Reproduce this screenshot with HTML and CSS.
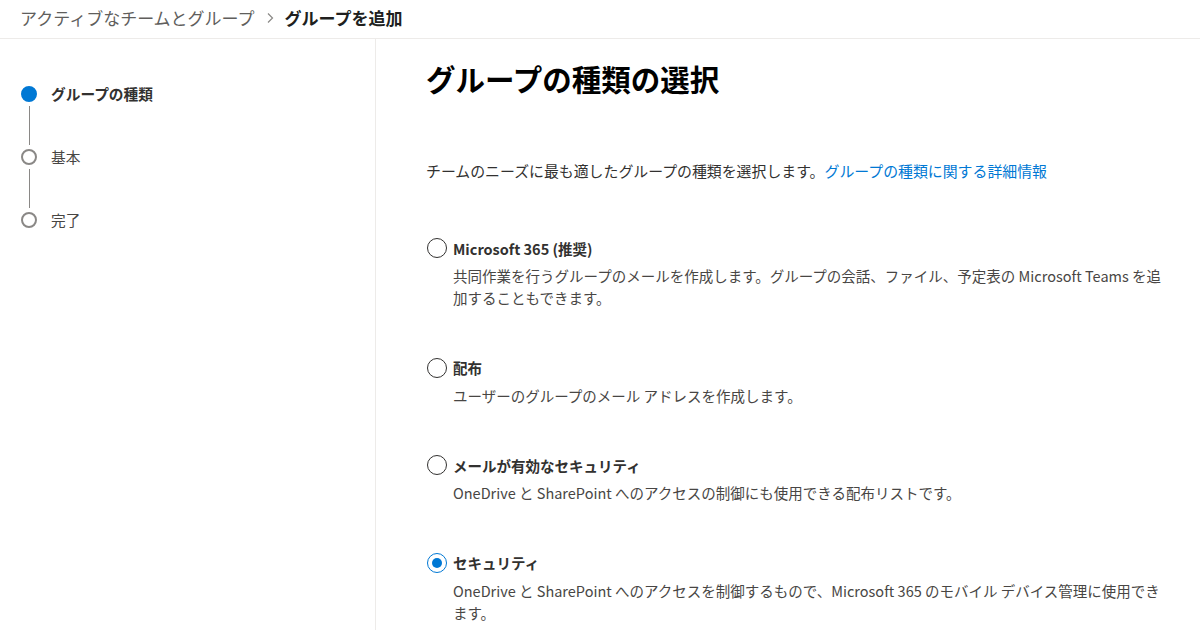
FILE: index.html
```html
<!DOCTYPE html>
<html lang="ja">
<head>
<meta charset="utf-8">
<title>グループを追加</title>
<link rel="stylesheet" href="styles.css">
</head>
<body>
<header class="topbar">
  <nav class="crumbs">
    <span class="crumb">アクティブなチームとグループ</span>
    <svg class="crumb-sep" width="10" height="12" viewBox="0 0 10 12"><path d="M3 1.5 L7.5 6 L3 10.5" fill="none" stroke="#8a8886" stroke-width="1.2"/></svg>
    <span class="crumb current">グループを追加</span>
  </nav>
</header>
<div class="layout">
  <aside class="wizard">
    <div class="step active"><span class="dot"></span><span class="step-label">グループの種類</span></div>
    <div class="connector"></div>
    <div class="step"><span class="dot"></span><span class="step-label">基本</span></div>
    <div class="connector"></div>
    <div class="step"><span class="dot"></span><span class="step-label">完了</span></div>
  </aside>
  <main class="content">
    <h1 class="title">グループの種類の選択</h1>
    <p class="intro">チームのニーズに最も適したグループの種類を選択します。<a class="link" href="#">グループの種類に関する詳細情報</a></p>
    <div class="options">
      <div class="option">
        <div class="option-head"><span class="radio"></span><span class="option-name">Microsoft 365 (推奨)</span></div>
        <p class="option-desc">共同作業を行うグループのメールを作成します。グループの会話、ファイル、予定表の Microsoft Teams を追<br>加することもできます。</p>
      </div>
      <div class="option">
        <div class="option-head"><span class="radio"></span><span class="option-name">配布</span></div>
        <p class="option-desc">ユーザーのグループのメール アドレスを作成します。</p>
      </div>
      <div class="option">
        <div class="option-head"><span class="radio"></span><span class="option-name">メールが有効なセキュリティ</span></div>
        <p class="option-desc">OneDrive と SharePoint へのアクセスの制御にも使用できる配布リストです。</p>
      </div>
      <div class="option">
        <div class="option-head"><span class="radio checked"></span><span class="option-name">セキュリティ</span></div>
        <p class="option-desc">OneDrive と SharePoint へのアクセスを制御するもので、Microsoft 365 のモバイル デバイス管理に使用でき<br>ます。</p>
      </div>
    </div>
  </main>
</div>
</body>
</html>
```

FILE: styles.css
```css
* { box-sizing: border-box; }

html, body {
  margin: 0;
  padding: 0;
  background: #ffffff;
  height: 100%;
  overflow: hidden;
}

body {
  font-family: "Noto Sans CJK JP", "Noto Sans", sans-serif;
  color: #323130;
  font-size: 15px;
}

.topbar {
  height: 39px;
  border-bottom: 1px solid #edebe9;
  display: flex;
  align-items: center;
  padding-left: 20px;
}

.crumbs {
  display: flex;
  align-items: center;
  font-size: 17px;
  line-height: 24px;
  margin-top: -3px;
}

.crumb { color: #605e5c; }

.crumb.current {
  color: #201f1e;
  font-weight: 700;
}

.crumb-sep { margin: 0 10px 0 10px; }

.layout {
  display: flex;
  height: calc(100% - 39px);
}

.wizard {
  width: 376px;
  flex: none;
  border-right: 1px solid #edebe9;
  padding: 47px 0 0 21px;
  display: flex;
  flex-direction: column;
}

.step {
  display: flex;
  align-items: center;
  height: 16px;
}

.dot {
  width: 16px;
  height: 16px;
  border-radius: 50%;
  border: 2px solid #8a8886;
  background: #fff;
  flex: none;
}

.step.active .dot {
  background: #0078d4;
  border-color: #0078d4;
}

.step-label {
  margin-left: 14px;
  font-size: 14.7px;
  line-height: 16px;
  color: #484644;
}

.step.active .step-label {
  font-weight: 700;
  color: #323130;
}

.connector {
  width: 1px;
  height: 39px;
  margin: 4px 0 4px 7.5px;
  background: #8a8886;
}

.content {
  flex: 1;
  padding: 19px 0 0 50px;
}

.title {
  margin: 0;
  font-size: 29.5px;
  line-height: 40px;
  font-weight: 700;
  color: #000;
}

.intro {
  margin: 62px 0 0 0;
  font-size: 14.9px;
  line-height: 22px;
  color: #323130;
}

.link {
  color: #0078d4;
  text-decoration: none;
}

.options {
  margin-top: 55px;
  display: flex;
  flex-direction: column;
  gap: 47.5px;
}

.option-head {
  display: flex;
  align-items: center;
  height: 22px;
}

.radio {
  width: 20px;
  height: 20px;
  border-radius: 50%;
  border: 1px solid #323130;
  margin-left: 1px;
  flex: none;
  display: flex;
  align-items: center;
  justify-content: center;
}

.radio.checked { border-color: #0078d4; }

.radio.checked::after {
  content: "";
  width: 10px;
  height: 10px;
  border-radius: 50%;
  background: #0078d4;
}

.option-name {
  margin-left: 6px;
  font-size: 14.5px;
  font-weight: 700;
  color: #323130;
}

.option-desc {
  margin: 6px 0 0 27px;
  font-size: 14.5px;
  line-height: 22px;
  color: #484644;
  white-space: nowrap;
}
```
